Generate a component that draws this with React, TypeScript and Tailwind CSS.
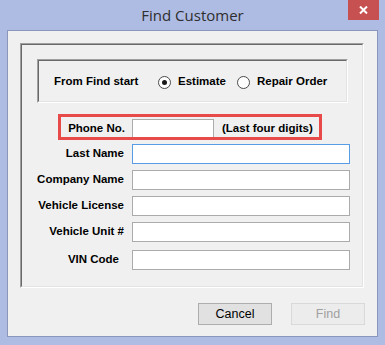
import React from "react";

const sunkenOuter = "border-t border-l border-t-[#a0a0a0] border-l-[#a0a0a0] border-r border-b border-r-white border-b-white";
const sunkenInner = "border-t border-l border-t-[#696969] border-l-[#696969] border-r border-b border-r-[#e3e3e3] border-b-[#e3e3e3]";

function Row({ label, mt, focused, pr }: { label: string; mt: string; focused?: boolean; pr?: string }) {
  return (
    <div className={`flex items-center h-[20px] ${mt}`}>
      <div className={`w-[102px] text-right font-bold text-[11.5px] text-black ${pr ?? ""}`}>{label}</div>
      <div
        className={`ml-[8px] w-[218px] h-[20px] bg-white border ${focused ? "border-[#569de5]" : "border-[#ababab]"}`}
      />
    </div>
  );
}

function Radio({ checked }: { checked?: boolean }) {
  return (
    <div className="w-[13px] h-[13px] rounded-full border border-[#4a4a4a] bg-white flex items-center justify-center shrink-0">
      {checked && <div className="w-[5px] h-[5px] rounded-full bg-[#1a1a1a]" />}
    </div>
  );
}

export default function App() {
  return (
    <div
      className="w-[385px] h-[345px] bg-[#aebbe3] flex flex-col"
      style={{ fontFamily: '"Liberation Sans", Arial, sans-serif' }}
    >
      <div className="relative h-[30px] flex items-center justify-center shrink-0">
        <span
          className="text-[15px] text-[#2e2e2e] leading-none mt-[1px]"
          style={{ fontFamily: '"Open Sans", "Noto Sans", sans-serif' }}
        >
          Find Customer
        </span>
        <div className="absolute right-[6px] top-0 w-[31px] h-[20px] bg-[#c75050] flex items-center justify-center">
          <svg width="9" height="8" viewBox="0 0 9 8">
            <path d="M1 0.5 L8 7.5 M8 0.5 L1 7.5" stroke="white" strokeWidth="2" />
          </svg>
        </div>
      </div>
      <div className="mx-[7px] h-[307px] border border-[#8b96bd] bg-[#f0f0f0] flex flex-col pt-[12px] pl-[12px] pr-[13px]">
        <div className={`h-[245px] ${sunkenOuter}`}>
          <div className={`h-full ${sunkenInner} flex flex-col`}>
            <div className={`ml-[15px] mt-[14px] w-[311px] h-[44px] ${sunkenOuter}`}>
              <div className={`h-full ${sunkenInner} flex items-center pl-[15px] pt-[2px] text-[11.5px] font-bold text-black`}>
                <span className="w-[104px]">From Find start</span>
                <Radio checked />
                <span className="ml-[7px] w-[59px]">Estimate</span>
                <Radio />
                <span className="ml-[7px]">Repair Order</span>
              </div>
            </div>
            <div className="relative flex items-center h-[20px] mt-[16px]">
              <div className="w-[103px] text-right font-bold text-[11.5px] text-black">Phone No.</div>
              <div className="ml-[7px] w-[82px] h-[20px] bg-white border border-[#ababab]" />
              <span className="ml-[8px] font-bold text-[11.5px] text-black">(Last four digits)</span>
              <div className="absolute left-[36px] top-[-5px] w-[264px] h-[26px] border-[3px] border-[#e84a4a]" />
            </div>
            <Row label="Last Name" mt="mt-[5px]" focused />
            <Row label="Company Name" mt="mt-[6px]" />
            <Row label="Vehicle License" mt="mt-[6px]" />
            <Row label="Vehicle Unit #" mt="mt-[6px]" />
            <Row label="VIN Code" mt="mt-[8px]" pr="pr-[5px]" />
          </div>
        </div>
        <div className="mt-[15px] mr-[-1px] flex justify-end gap-[19px]">
          <div className="w-[74px] h-[22px] border border-[#adadad] bg-[#e1e1e1] flex items-center justify-center text-[12.5px] text-black">
            Cancel
          </div>
          <div className="w-[74px] h-[22px] border border-[#d9d9d9] bg-[#ececec] flex items-center justify-center text-[12.5px] text-[#a0a0a0]">
            Find
          </div>
        </div>
      </div>
    </div>
  );
}
